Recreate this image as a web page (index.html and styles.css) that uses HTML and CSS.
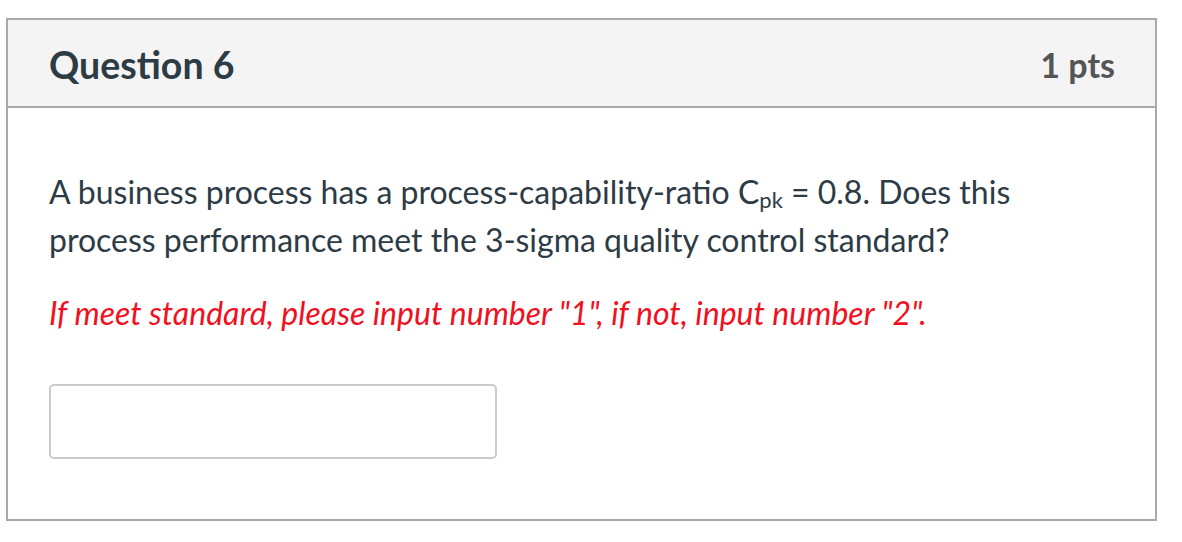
FILE: index.html
```html
<!DOCTYPE html>
<html lang="en">
<head>
<meta charset="utf-8">
<title>Question 6</title>
<link rel="stylesheet" href="styles.css">
</head>
<body>
<div class="card">
  <div class="card-header">
    <h2 class="title">Question 6</h2>
    <div class="points">1 pts</div>
  </div>
  <div class="card-body">
    <p class="question">A business process has a process-capability-ratio C<sub>pk</sub> = 0.8. Does this process performance meet the 3-sigma quality control standard?</p>
    <p class="hint">If meet standard, please input number "1", if not, input number "2".</p>
    <input class="answer" type="text" aria-label="Answer">
  </div>
</div>
</body>
</html>
```
FILE: styles.css
```css
html, body {
  margin: 0;
  padding: 0;
  background: #fff;
}
body {
  font-family: Lato, "Open Sans", sans-serif;
  color: #2d3b45;
}
.card {
  margin: 18px 0 0 6px;
  width: 1151px;
  height: 503px;
  box-sizing: border-box;
  border: 2px solid #a9a9a9;
  display: flex;
  flex-direction: column;
}
.card-header {
  height: 88px;
  box-sizing: border-box;
  background: #f4f4f4;
  border-bottom: 2px solid #a9a9a9;
  display: flex;
  align-items: center;
  justify-content: space-between;
  padding: 2px 40px 0 41px;
}
.title {
  margin: 0;
  font-size: 37.5px;
  font-weight: 700;
  color: #2d3b45;
}
.points {
  font-size: 34px;
  font-weight: 700;
  color: #555;
}
.card-body {
  padding: 60px 40px 0 41px;
}
.question {
  margin: 0;
  font-size: 32px;
  line-height: 48px;
}
.question sub {
  font-size: 22px;
  vertical-align: -4px;
  line-height: 1;
}
.hint {
  margin: 25px 0 0;
  font-size: 32px;
  line-height: 48px;
  font-style: italic;
  color: #f0101e;
}
.answer {
  display: block;
  margin-top: 47px;
  width: 448px;
  height: 75px;
  box-sizing: border-box;
  border: 2px solid #cacaca;
  border-radius: 5px;
  background: #fff;
}
```
